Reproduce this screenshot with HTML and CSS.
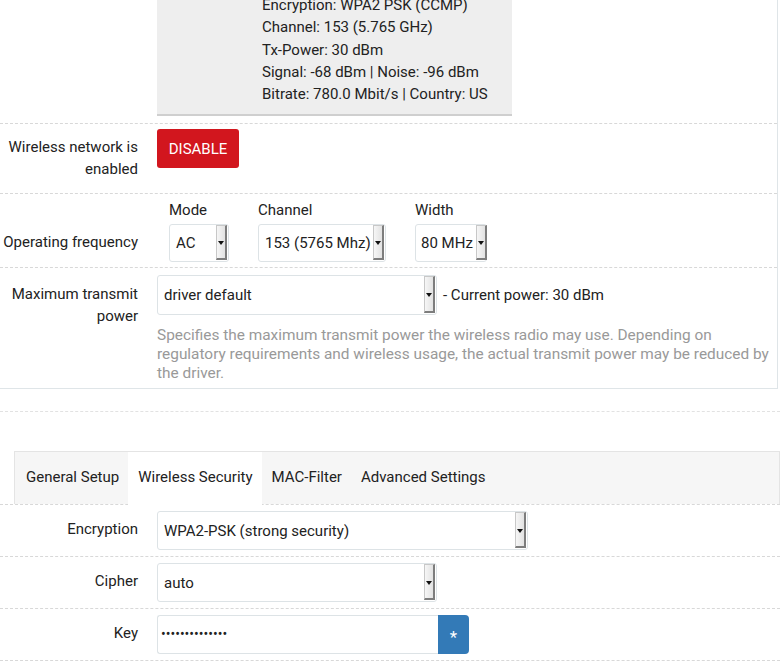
FILE: index.html
```html
<!DOCTYPE html>
<html>
<head>
<meta charset="utf-8">
<link rel="stylesheet" href="styles.css">
</head>
<body>
<div class="section">
  <div class="row status-row">
    <div class="label"></div>
    <div class="status">
      <div>Encryption: WPA2 PSK (CCMP)</div>
      <div>Channel: 153 (5.765 GHz)</div>
      <div>Tx-Power: 30 dBm</div>
      <div>Signal: -68 dBm | Noise: -96 dBm</div>
      <div>Bitrate: 780.0 Mbit/s | Country: US</div>
    </div>
  </div>
  <div class="row dashed row-enable">
    <div class="label">Wireless network is enabled</div>
    <div class="field"><button class="btn-disable">DISABLE</button></div>
  </div>
  <div class="row dashed row-freq">
    <div class="label">Operating frequency</div>
    <div class="field freq">
      <div class="group">
        <div class="sublabel">Mode</div>
        <div class="select w-mode"><span class="val">AC</span><span class="arrow"></span></div>
      </div>
      <div class="group">
        <div class="sublabel">Channel</div>
        <div class="select w-chan"><span class="val">153 (5765 Mhz)</span><span class="arrow"></span></div>
      </div>
      <div class="group">
        <div class="sublabel">Width</div>
        <div class="select w-width"><span class="val">80 MHz</span><span class="arrow"></span></div>
      </div>
    </div>
  </div>
  <div class="row dashed row-power">
    <div class="label">Maximum transmit power</div>
    <div class="field">
      <div class="inline">
        <div class="select w-power"><span class="val">driver default</span><span class="arrow"></span></div>
        <span class="after">- Current power: 30 dBm</span>
      </div>
      <div class="desc">Specifies the maximum transmit power the wireless radio may use. Depending on regulatory requirements and wireless usage, the actual transmit power may be reduced by the driver.</div>
    </div>
  </div>
</div>
<div class="sep"></div>
<div class="tabs">
  <div class="tab">General Setup</div>
  <div class="tab active">Wireless Security</div>
  <div class="tab">MAC-Filter</div>
  <div class="tab">Advanced Settings</div>
</div>
<div class="row dashed row-sec">
  <div class="label">Encryption</div>
  <div class="field"><div class="select w-enc"><span class="val">WPA2-PSK (strong security)</span><span class="arrow"></span></div></div>
</div>
<div class="row dashed row-sec">
  <div class="label">Cipher</div>
  <div class="field"><div class="select w-cipher"><span class="val">auto</span><span class="arrow"></span></div></div>
</div>
<div class="row dashed row-sec last">
  <div class="label">Key</div>
  <div class="field">
    <div class="keygroup">
      <div class="keyinput">••••••••••••••</div>
      <div class="keybtn">*</div>
    </div>
  </div>
</div>
</body>
</html>
```
FILE: styles.css
```css
html, body {
  margin: 0;
  padding: 0;
  background: #fff;
  overflow: hidden;
}
body {
  font-family: Roboto, "Liberation Sans", sans-serif;
  font-size: 15px;
  color: #222;
  width: 780px;
  height: 668px;
}
.section {
  width: 777px;
  border-right: 1px solid #dfe5e8;
  border-bottom: 1px solid #dfe5e8;
}
.row {
  display: flex;
  align-items: flex-start;
}
.dashed {
  border-top: 1px dashed #d8d8d8;
}
.label {
  width: 138px;
  flex: none;
  padding-right: 19px;
  text-align: right;
  line-height: 22px;
}
.field {
  flex: 1;
}
.status-row {
  padding-bottom: 7px;
}
.status {
  margin-top: -6px;
  width: 250px;
  background: #eeeeee;
  border-bottom: 2px solid #cfcfcf;
  padding: 0 0 9px 105px;
  line-height: 22.3px;
}
.row-enable {
  padding: 5px 0 13px;
}
.row-enable .label {
  padding-top: 7px;
}
.btn-disable {
  display: block;
  font-family: Roboto, "Liberation Sans", sans-serif;
  font-size: 15px;
  color: #fff;
  background: #d2161e;
  border: none;
  border-radius: 3px;
  width: 82px;
  height: 39px;
  padding: 0;
}
.row-freq {
  padding: 5px 0 5px;
}
.row-freq .label {
  padding-top: 32px;
}
.freq {
  display: flex;
  gap: 29px;
  padding-left: 12px;
}
.sublabel {
  line-height: 22px;
  height: 25px;
}
.select {
  display: flex;
  align-items: stretch;
  box-sizing: border-box;
  height: 38px;
  border: 1px solid #dde3e6;
  border-radius: 3px;
  background: #fff;
  padding: 1px 1px 1px 6px;
}
.select .val {
  flex: 1;
  align-self: center;
  white-space: nowrap;
}
.arrow {
  position: relative;
  width: 8px;
  flex: none;
  background: linear-gradient(to right, #f6f6f6, #e2e2e2);
  border: 1px solid #c8c8c8;
  border-right: 2px solid #7d7d7d;
  border-bottom: 2px solid #7d7d7d;
  margin-top: -1px;
}
.arrow::after {
  content: "";
  position: absolute;
  left: 1px;
  top: 50%;
  margin-top: -1px;
  border-top: 4px solid #111;
  border-left: 3px solid transparent;
  border-right: 3px solid transparent;
}
.w-mode { width: 60px; }
.w-chan { width: 128px; }
.w-width { width: 72px; padding-left: 5px; }
.w-width .val { margin-right: 3px; }
.w-power { width: 280px; height: 40px; }
.w-enc { width: 371px; height: 39px; }
.w-cipher { width: 280px; height: 39px; }
.row-power {
  padding: 7px 0 5px;
}
.row-power .label {
  padding-top: 8px;
}
.inline {
  display: flex;
  align-items: center;
}
.after {
  margin-left: 6px;
}
.desc {
  color: #999;
  font-size: 15.4px;
  line-height: 19px;
  margin-top: 11px;
}
.sep {
  height: 22px;
  border-bottom: 1px dashed #e2e2e2;
  margin-bottom: 39px;
}
.tabs {
  display: flex;
  margin-left: 14px;
  height: 53px;
  box-sizing: border-box;
  background: #f6f6f6;
  border: 1px solid #e4e4e4;
  border-bottom: none;
  padding-left: 1px;
}
.tab {
  padding: 0 9px 0 10px;
  line-height: 51px;
  white-space: nowrap;
}
.tab.active {
  background: #fff;
  margin-bottom: -1px;
}
.row-sec {
  padding: 6px 0 6px;
}
.row-sec .label {
  padding-top: 7px;
}
.keygroup {
  display: flex;
  height: 39px;
}
.keyinput {
  box-sizing: border-box;
  width: 281px;
  border: 1px solid #dde3e6;
  border-right: none;
  border-radius: 3px 0 0 3px;
  padding-left: 3px;
  line-height: 37px;
  font-size: 14px;
}
.keybtn {
  width: 31px;
  background: #337ab7;
  color: #fff;
  border-radius: 0 4px 4px 0;
  text-align: center;
  line-height: 44px;
  font-size: 17px;
}
.row-sec.last {
  border-bottom: 1px dashed #d8d8d8;
}
```
